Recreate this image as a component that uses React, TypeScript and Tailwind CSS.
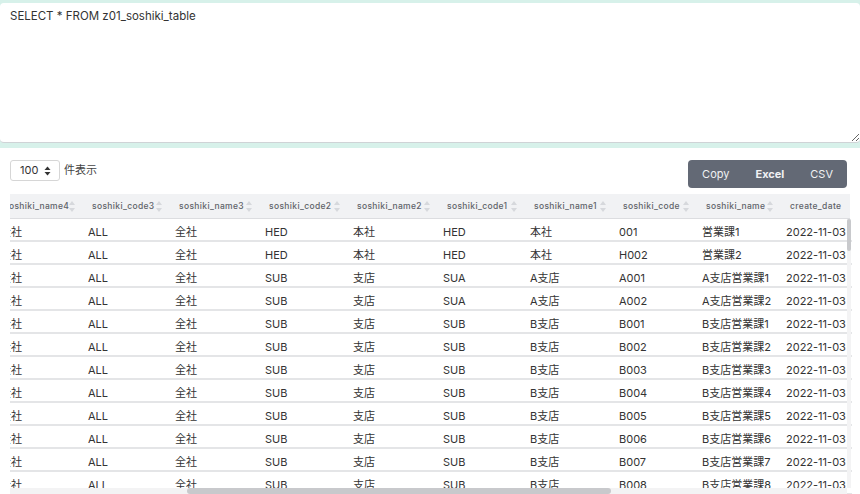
import { useLayoutEffect, useRef } from "react";

type Col = { key: string; label: string; width: number };

const columns: Col[] = [
	{ key: "id", label: "id", width: 60 },
	{ key: "code5", label: "soshiki_code5", width: 90 },
	{ key: "name5", label: "soshiki_name5", width: 90 },
	{ key: "code4", label: "soshiki_code4", width: 90 },
	{ key: "name4", label: "soshiki_name4", width: 88 },
	{ key: "code3", label: "soshiki_code3", width: 87 },
	{ key: "name3", label: "soshiki_name3", width: 90 },
	{ key: "code2", label: "soshiki_code2", width: 88 },
	{ key: "name2", label: "soshiki_name2", width: 90 },
	{ key: "code1", label: "soshiki_code1", width: 87 },
	{ key: "name1", label: "soshiki_name1", width: 89 },
	{ key: "code", label: "soshiki_code", width: 83 },
	{ key: "name", label: "soshiki_name", width: 84 },
	{ key: "create_date", label: "create_date", width: 84 },
	{ key: "create_user", label: "create_user", width: 88 },
	{ key: "update_date", label: "update_date", width: 86 },
	{ key: "update_user", label: "update_user", width: 88 },
	{ key: "del_flg", label: "del_flg", width: 70 },
	{ key: "version", label: "version", width: 62 },
	{ key: "note", label: "note", width: 64 },
];

const tableWidth = columns.reduce((s, c) => s + c.width, 0);

type Row = Record<string, string>;

function buildRows(): Row[] {
	const rows: Row[] = [];
	const base = (i: number): Row => ({
		id: String(i + 1),
		code5: "ALL",
		name5: "全社",
		code4: "ALL",
		name4: "全社",
		code3: "ALL",
		name3: "全社",
		create_date: "2022-11-03",
		create_user: "admin",
		update_date: "2022-11-03",
		update_user: "admin",
		del_flg: "0",
		version: "1",
		note: "",
	});
	rows.push({ ...base(0), code2: "HED", name2: "本社", code1: "HED", name1: "本社", code: "001", name: "営業課1" });
	rows.push({ ...base(1), code2: "HED", name2: "本社", code1: "HED", name1: "本社", code: "H002", name: "営業課2" });
	rows.push({ ...base(2), code2: "SUB", name2: "支店", code1: "SUA", name1: "A支店", code: "A001", name: "A支店営業課1" });
	rows.push({ ...base(3), code2: "SUB", name2: "支店", code1: "SUA", name1: "A支店", code: "A002", name: "A支店営業課2" });
	const letters = "BCDEFGHIJKLMNOP";
	let li = 0;
	while (rows.length < 100) {
		const L = letters[li];
		for (let n = 1; n <= 8 && rows.length < 100; n++) {
			rows.push({
				...base(rows.length),
				code2: "SUB",
				name2: "支店",
				code1: "SU" + L,
				name1: L + "支店",
				code: L + "00" + n,
				name: L + "支店営業課" + n,
			});
		}
		li++;
	}
	return rows;
}

const rows = buildRows();

function SortIcon() {
	return (
		<svg width="6" height="11" viewBox="0 0 6 11" className="shrink-0">
			<path d="M3 0 L6 4 L0 4 Z" fill="#d6d8dc" />
			<path d="M3 11 L6 7 L0 7 Z" fill="#d6d8dc" />
		</svg>
	);
}

function SelectIcon() {
	return (
		<svg width="7" height="10" viewBox="0 0 7 10">
			<path d="M3.5 0.5 L6.5 4 L0.5 4 Z" fill="#333" />
			<path d="M3.5 9.5 L6.5 6 L0.5 6 Z" fill="#333" />
		</svg>
	);
}

export default function App() {
	const headRef = useRef<HTMLDivElement>(null);
	const bodyRef = useRef<HTMLDivElement>(null);

	useLayoutEffect(() => {
		if (bodyRef.current) bodyRef.current.scrollLeft = 350;
		if (headRef.current) headRef.current.scrollLeft = 350;
	}, []);

	const onScroll = () => {
		if (headRef.current && bodyRef.current) headRef.current.scrollLeft = bodyRef.current.scrollLeft;
	};

	return (
		<div className="w-[860px] h-[494px] overflow-hidden bg-white font-[Inter,'Noto_Sans_CJK_JP',sans-serif] text-[#333]">
			{/* SQL input */}
			<div className="bg-[#d7f1ea] pt-[3px] pb-[5px]">
				<textarea
					defaultValue="SELECT * FROM z01_soshiki_table"
					className="block w-full h-[140px] bg-white rounded-[4px] border-b border-[#cfd3d6] px-[10px] py-[5px] text-[11.5px] leading-[16px] text-[#333] outline-none"
				/>
			</div>

			{/* Result panel */}
			<div className="px-[10px] pt-[12px]">
				<div className="flex items-start justify-between">
					<div className="flex items-center gap-[4px]">
						<div className="flex items-center justify-between w-[50px] h-[21px] border border-[#d6d6d6] rounded-[3px] pl-[9px] pr-[8px] text-[11px]">
							<span>100</span>
							<SelectIcon />
						</div>
						<span className="text-[11px] text-[#444]">件表示</span>
					</div>
					<div className="flex h-[28px] mr-[3px] rounded-[4px] bg-[#636975] text-[#f0f1f3] text-[11px] overflow-hidden">
						<button className="pl-[14px] pr-[13px]">Copy</button>
						<button className="px-[13px] font-bold">Excel</button>
						<button className="pl-[13px] pr-[14px]">CSV</button>
					</div>
				</div>

				{/* Table header */}
				<div ref={headRef} className="mt-[6px] w-[840px] overflow-hidden bg-[#f1f2f4] border-b border-[#dcdde0]">
					<div className="flex h-[24px]" style={{ width: tableWidth + 20 }}>
						{columns.map((c) => (
							<div
								key={c.key}
								className="flex items-center justify-between shrink-0 pl-[14px] pr-[3px] text-[8.5px] font-medium tracking-[0.35px] text-[#606369] whitespace-nowrap"
								style={{ width: c.width }}
							>
								<span>{c.label}</span>
								<SortIcon />
							</div>
						))}
					</div>
				</div>

				{/* Table body */}
				<div className="relative w-[842px] h-[275px]">
					<div
						ref={bodyRef}
						onScroll={onScroll}
						className="w-full h-full overflow-auto [scrollbar-width:none]"
					>
						<div style={{ width: tableWidth }}>
							{rows.map((r) => (
								<div key={r.id} className="flex h-[23px] border-b-2 border-[#e4e5e7]">
									{columns.map((c) => (
										<div
											key={c.key}
											className="shrink-0 pl-[10px] pt-[6px] text-[11px] leading-[14px] whitespace-nowrap overflow-hidden"
											style={{ width: c.width }}
										>
											{r[c.key]}
										</div>
									))}
								</div>
							))}
						</div>
					</div>
					{/* scrollbars */}
					<div className="absolute right-[1px] top-0 bottom-[6px] w-[4px] bg-[#f3f3f4]">
						<div className="h-[32px] w-full rounded-full bg-[#c8c9cc]" />
					</div>
					<div className="absolute left-0 right-[5px] bottom-0 h-[6px] bg-[#f3f3f4]">
						<div className="absolute left-[177px] w-[424px] h-full rounded-full bg-[#c8c9cc]" />
					</div>
				</div>
			</div>
		</div>
	);
}
